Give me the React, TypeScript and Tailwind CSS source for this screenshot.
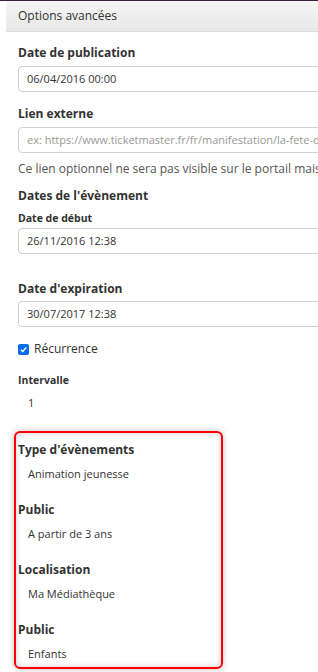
import React from "react";

/* ---------- small building blocks ---------- */
function Label({ children, small }: { children: React.ReactNode; small?: boolean }) {
  return (
    <div
      className={
        small
          ? "text-[10.5px] font-bold text-[#333] leading-[16px]"
          : "text-[12px] font-bold text-[#333] leading-[18px]"
      }
    >
      {children}
    </div>
  );
}

function Field({ value, placeholder }: { value?: string; placeholder?: string }) {
  return (
    <div className="w-[420px] h-[26px] rounded-[4px] border border-[#cfcfcf] bg-white flex items-center pl-[8px] text-[11px]">
      {value ? (
        <span className="text-[#333]">{value}</span>
      ) : (
        <span className="text-[#999] whitespace-nowrap">{placeholder}</span>
      )}
    </div>
  );
}

function ReadOnly({ label, value }: { label: string; value: string }) {
  return (
    <div className="flex flex-col">
      <Label>{label}</Label>
      <div className="mt-[6px] pl-[10px] text-[11px] text-[#333] leading-[18px]">{value}</div>
    </div>
  );
}

export default function App() {
  return (
    <div
      className="w-[318px] h-[672px] overflow-hidden bg-white"
      style={{ fontFamily: '"Open Sans", "Noto Sans", sans-serif' }}
    >
      <div className="h-[1px] bg-[#3b1f3b]" />

      {/* Panel header */}
      <div className="ml-[6px] h-[31px] bg-gradient-to-b from-[#f5f5f5] to-[#e8e8e8] border-b border-[#dcdcdc] flex items-center pl-[12px]">
        <span className="text-[12px] text-[#333]">Options avancées</span>
      </div>

      <div className="pl-[18px] pt-[12px] flex flex-col">
        <Label>Date de publication</Label>
        <div className="mt-[4px]">
          <Field value="06/04/2016 00:00" />
        </div>

        <div className="mt-[13px]">
          <Label>Lien externe</Label>
        </div>
        <div className="mt-[4px]">
          <Field placeholder="ex: https://www.ticketmaster.fr/fr/manifestation/la-fete-de-la-musique" />
        </div>
        <div className="mt-[7px] text-[12px] text-[#555] whitespace-nowrap leading-[18px]">
          Ce lien optionnel ne sera pas visible sur le portail mais sera utilisé
        </div>

        <div className="mt-[9px]">
          <Label>Dates de l'évènement</Label>
        </div>
        <div className="mt-[5px]">
          <Label small>Date de début</Label>
        </div>
        <div className="mt-[2px]">
          <Field value="26/11/2016 12:38" />
        </div>

        <div className="mt-[26px]">
          <Label>Date d'expiration</Label>
        </div>
        <div className="mt-[3px]">
          <Field value="30/07/2017 12:38" />
        </div>

        <label className="mt-[13px] flex items-center gap-[5px]">
          <span className="w-[11px] h-[11px] rounded-[2px] bg-[#0a6ee8] flex items-center justify-center">
            <svg viewBox="0 0 12 12" className="w-[9px] h-[9px]">
              <path d="M2.5 6.2 L5 8.6 L9.6 3.4" fill="none" stroke="#fff" strokeWidth="1.8" />
            </svg>
          </span>
          <span className="text-[12px] text-[#333] leading-[18px]">Récurrence</span>
        </label>

        <div className="mt-[14px]">
          <Label small>Intervalle</Label>
        </div>
        <div className="mt-[6px] pl-[10px] text-[11px] text-[#333] leading-[18px]">1</div>

        {/* highlighted block */}
        <div className="mt-[19px] -ml-[4px] w-[209px] h-[238px] rounded-[6px] border-2 border-[#ff0000] shadow-[0_0_6px_rgba(0,0,0,0.25),inset_0_0_6px_rgba(0,0,0,0.2)] pl-[2px] pt-[8px] flex flex-col gap-[18px]">
          <ReadOnly label="Type d'évènements" value="Animation jeunesse" />
          <ReadOnly label="Public" value="A partir de 3 ans" />
          <ReadOnly label="Localisation" value="Ma Médiathèque" />
          <ReadOnly label="Public" value="Enfants" />
        </div>
      </div>
    </div>
  );
}
